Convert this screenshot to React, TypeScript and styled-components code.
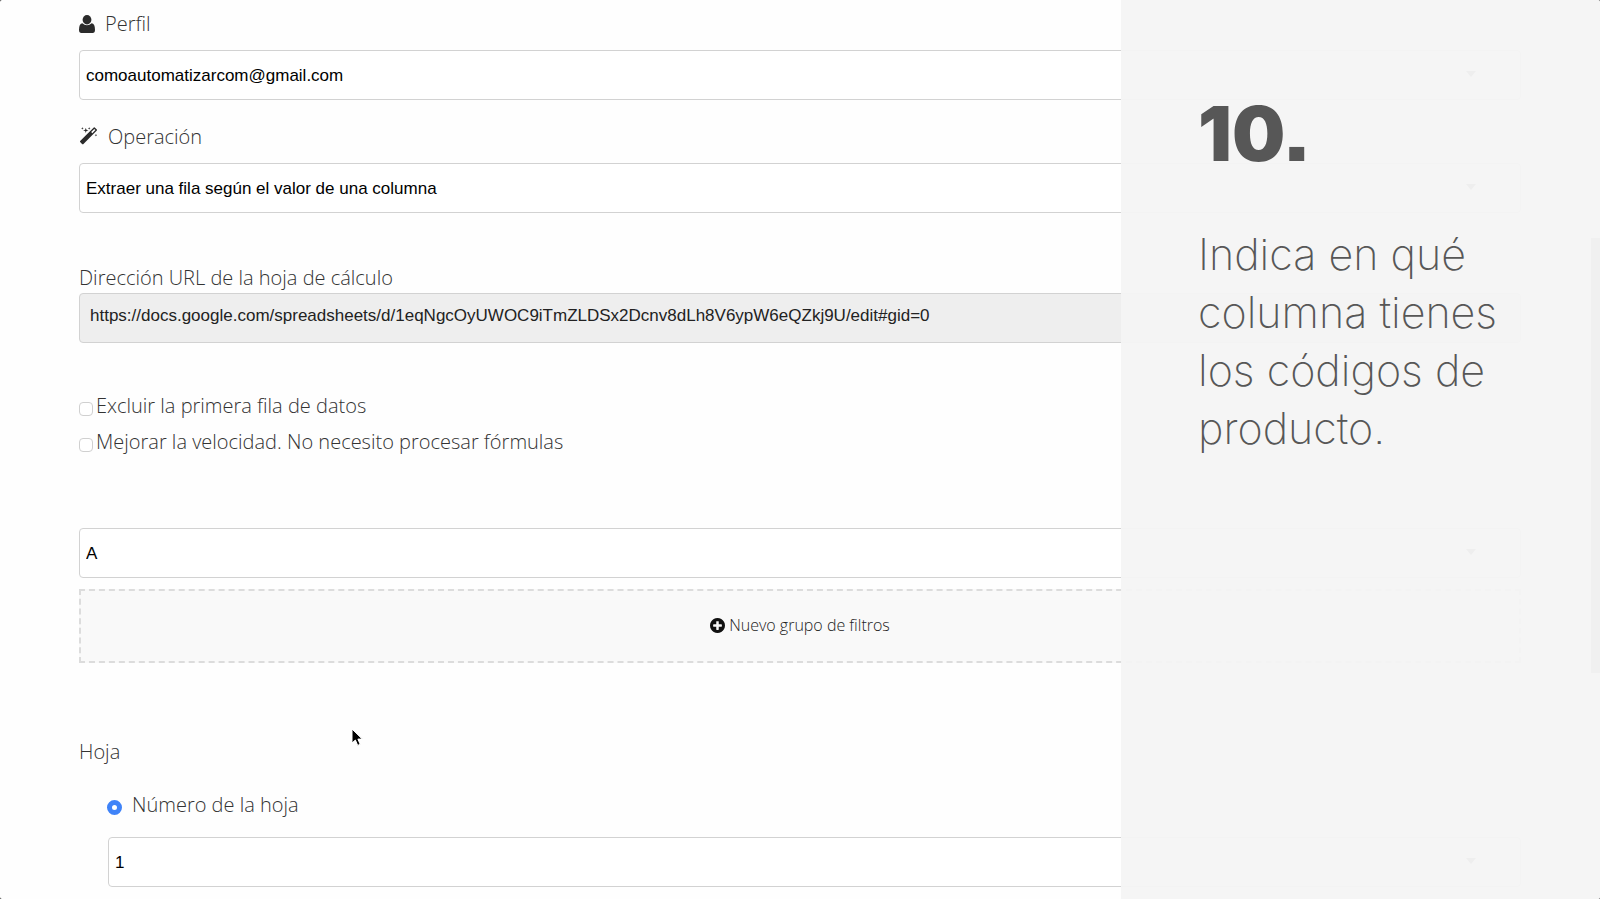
import React from "react";
import styled, { createGlobalStyle } from "styled-components";

const GlobalStyle = createGlobalStyle`
  *, *::before, *::after { box-sizing: border-box; }
  html { background: #333; }
  body { margin: 0; }
`;

const Screen = styled.div`
  position: relative;
  min-height: 100vh;
  overflow: hidden;
  border-radius: 2px;
  background: #fefefe;
  color: #333;
  font-family: "Open Sans", "Noto Sans", sans-serif;
  font-size: 20px;
  font-weight: 300;
`;

const Form = styled.form`
  display: flex;
  flex-direction: column;
  padding: 0 79px 12px;
`;

const Section = styled.section<{ $gap?: number; $indent?: number }>`
  display: flex;
  flex-direction: column;
  margin-top: ${(p) => p.$gap ?? 0}px;
  padding-left: ${(p) => p.$indent ?? 0}px;
`;

const IconLabel = styled.label`
  display: flex;
  align-items: center;
  gap: 10px;
  height: 50px;
  padding-bottom: 3px;
`;

const Label = styled.label`
  line-height: 30px;
`;

const Heading = styled.h2`
  margin: 0;
  font-size: 20px;
  font-weight: 300;
  line-height: 30px;
`;

const SelectBox = styled.div`
  position: relative;
  display: flex;
`;

const Select = styled.select`
  appearance: none;
  flex: 1;
  height: 50px;
  padding: 0 60px 0 6px;
  border: 1px solid #d2d2d2;
  border-radius: 4px;
  background: #fff;
  color: #000;
  font: 17px "Liberation Sans", Arial, sans-serif;
`;

const Arrow = styled.svg`
  position: absolute;
  right: 45px;
  top: 21px;
  pointer-events: none;
`;

const UrlInput = styled.input`
  height: 50px;
  padding: 0 10px 5px;
  border: 1px solid #d2d2d2;
  border-radius: 4px;
  background: #eee;
  color: #222;
  font: 17px "Liberation Sans", Arial, sans-serif;
`;

const OptionRow = styled.label<{ $gap?: number }>`
  display: flex;
  align-items: center;
  gap: ${(p) => p.$gap ?? 3}px;
  height: 36px;
  padding-bottom: 3px;
`;

const Checkbox = styled.input`
  appearance: none;
  width: 14px;
  height: 14px;
  margin: 6px 0 0;
  border: 1px solid #d0d0d0;
  border-radius: 4px;
  background: #fff;
`;

const Radio = styled.input`
  appearance: none;
  width: 15px;
  height: 15px;
  margin: 6px 0 0;
  border: 5px solid #3f83f8;
  border-radius: 50%;
  background: #fff;
`;

const AddButton = styled.button`
  display: flex;
  align-items: center;
  justify-content: center;
  gap: 4px;
  height: 74px;
  margin-top: 11px;
  padding-bottom: 3px;
  border: 2px dashed #dcdcdc;
  background: #f9f9f9;
  color: #222;
  font: 300 16px "Open Sans", "Noto Sans", sans-serif;
`;

const ScrollThumb = styled.div`
  position: absolute;
  top: 238px;
  right: 0;
  width: 9px;
  height: 435px;
  background: #a0a0a0;
`;

const Pointer = styled.svg`
  position: absolute;
  left: 350px;
  top: 727px;
`;

const Panel = styled.aside`
  position: absolute;
  inset: 0 0 0 auto;
  width: 479px;
  padding: 88px 60px 0 77px;
  background: rgba(244, 244, 244, 0.94);
  color: #575757;
  font-family: Inter, sans-serif;
  font-feature-settings: "ss07";
`;

const StepNumber = styled.h1`
  margin: 0;
  font-size: 75px;
  font-weight: 900;
  line-height: 92px;
`;

const StepText = styled.p`
  margin: 45px 0 0;
  font-size: 43px;
  font-weight: 200;
  line-height: 58px;
`;

function SelectField({ id, value, label }: { id: string; value: string; label?: string }) {
  return (
    <SelectBox>
      <Select id={id} aria-label={label} defaultValue={value}>
        <option>{value}</option>
      </Select>
      <Arrow width="10" height="6" viewBox="0 0 10 6" aria-hidden="true">
        <path d="M0 0h10L5 6z" fill="#888" />
      </Arrow>
    </SelectBox>
  );
}

const UserIcon = () => (
  <svg width="16" height="18" viewBox="0 0 16 18" fill="#2b2b2b" aria-hidden="true">
    <ellipse cx="8" cy="4.7" rx="4.4" ry="4.7" />
    <path d="M3.4 8.2Q5.4 10.2 8 10.2T12.6 8.2Q16 8.6 16 14.8Q16 18 13.6 18H2.4Q0 18 0 14.8Q0 8.6 3.4 8.2z" />
  </svg>
);

const MagicIcon = () => (
  <svg width="19" height="19" viewBox="0 0 1792 1792" fill="#2b2b2b" aria-hidden="true">
    <path d="M1254 581l293-293-107-107-293 293zm447-293q0 27-18 45l-1286 1286q-18 18-45 18t-45-18l-198-198q-18-18-18-45t18-45l1286-1286q18-18 45-18t45 18l198 198q18 18 18 45zm-1351-190l98 30-98 30-30 98-30-98-98-30 98-30 30-98zm350 162l196 60-196 60-60 196-60-196-196-60 196-60 60-196zm930 478l98 30-98 30-30 98-30-98-98-30 98-30 30-98zm-640-640l98 30-98 30-30 98-30-98-98-30 98-30 30-98z" />
  </svg>
);

const PlusIcon = () => (
  <svg width="15" height="15" viewBox="128 128 1536 1536" fill="#111" aria-hidden="true">
    <path d="M1344 960v-128q0-26-19-45t-45-19h-256v-256q0-26-19-45t-45-19h-128q-26 0-45 19t-19 45v256h-256q-26 0-45 19t-19 45v128q0 26 19 45t45 19h256v256q0 26 19 45t45 19h128q26 0 45-19t19-45v-256h256q26 0 45-19t19-45zm320-64q0 209-103 385.5t-279.5 279.5-385.5 103-385.5-103-279.5-279.5-103-385.5 103-385.5 279.5-279.5 385.5-103 385.5 103 279.5 279.5 103 385.5z" />
  </svg>
);

export default function App() {
  return (
    <Screen>
      <GlobalStyle />
      <Form>
        <Section>
          <IconLabel htmlFor="perfil">
            <UserIcon />
            Perfil
          </IconLabel>
          <SelectField id="perfil" value="comoautomatizarcom@gmail.com" />
        </Section>
        <Section $gap={13}>
          <IconLabel htmlFor="operacion">
            <MagicIcon />
            Operación
          </IconLabel>
          <SelectField id="operacion" value="Extraer una fila según el valor de una columna" />
        </Section>
        <Section $gap={50}>
          <Label htmlFor="url">Dirección URL de la hoja de cálculo</Label>
          <UrlInput
            id="url"
            readOnly
            value="https://docs.google.com/spreadsheets/d/1eqNgcOyUWOC9iTmZLDSx2Dcnv8dLh8V6ypW6eQZkj9U/edit#gid=0"
          />
        </Section>
        <Section $gap={46}>
          <OptionRow>
            <Checkbox type="checkbox" />
            Excluir la primera fila de datos
          </OptionRow>
          <OptionRow>
            <Checkbox type="checkbox" />
            Mejorar la velocidad. No necesito procesar fórmulas
          </OptionRow>
        </Section>
        <Section $gap={67}>
          <SelectField id="columna" label="Columna" value="A" />
          <AddButton type="button">
            <PlusIcon />
            Nuevo grupo de filtros
          </AddButton>
        </Section>
        <Section $gap={74}>
          <Heading>Hoja</Heading>
        </Section>
        <Section $gap={21} $indent={28}>
          <OptionRow $gap={10}>
            <Radio type="radio" name="hoja" defaultChecked />
            Número de la hoja
          </OptionRow>
        </Section>
        <Section $gap={13} $indent={29}>
          <SelectField id="numero" label="Número de la hoja" value="1" />
        </Section>
      </Form>
      <ScrollThumb />
      <Panel>
        <StepNumber>10.</StepNumber>
        <StepText>Indica en qué columna tienes los códigos de producto.</StepText>
      </Panel>
      <Pointer width="14" height="22" viewBox="0 0 14 22" aria-hidden="true">
        <path
          d="M2 2v14l3.4-3 2.3 5.4 2.5-1.1-2.3-5.2h4.4z"
          fill="#000"
          stroke="#fff"
          strokeWidth="1"
        />
      </Pointer>
    </Screen>
  );
}
